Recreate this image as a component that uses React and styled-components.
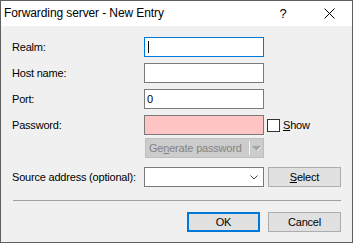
import React from "react";
import styled, { createGlobalStyle } from "styled-components";

const Global = createGlobalStyle`
  html, body { margin: 0; padding: 0; background: #ffffff; }
  * { box-sizing: border-box; }
`;

const Window = styled.div`
  width: 353px;
  height: 243px;
  border: 1px solid #5f5f5f;
  display: flex;
  flex-direction: column;
  font-family: "Liberation Sans", Arial, sans-serif;
  font-size: 11px;
  letter-spacing: -0.2px;
  color: #000;
  background: #f0f0f0;
`;

const TitleBar = styled.div`
  height: 25px;
  background: #ffffff;
  display: flex;
  align-items: center;
  padding-left: 3px;
`;

const Title = styled.div`
  flex: 1;
  font-size: 12px;
  letter-spacing: -0.1px;
  padding-bottom: 1px;
`;

const Help = styled.div`
  width: 46px;
  text-align: center;
  font-size: 13px;
  margin-right: 0;
`;

const Close = styled.div`
  width: 46px;
  height: 25px;
  display: flex;
  align-items: center;
  justify-content: center;
`;

const Body = styled.div`
  flex: 1;
  padding: 11px 11px 0 11px;
  display: flex;
  flex-direction: column;
`;

const Row = styled.div`
  display: flex;
  align-items: center;
  height: 20px;
  margin-top: ${(p) => p.$mt || 0}px;
`;

const Label = styled.div`
  width: 132px;
  padding-bottom: 1px;
`;

const Field = styled.div`
  width: 120px;
  height: 20px;
  background: ${(p) => (p.$error ? "#ffc4c4" : "#ffffff")};
  border: 1px solid ${(p) => (p.$focus ? "#0078d7" : "#7a7a7a")};
  display: flex;
  align-items: center;
  padding-left: 2px;
  position: relative;
`;

const Caret = styled.span`
  width: 1px;
  height: 12px;
  background: #000;
  margin-left: 1px;
`;

const Chevron = styled.svg`
  position: absolute;
  right: 5px;
  top: 7px;
`;

const CheckRow = styled.label`
  display: flex;
  align-items: center;
  margin-left: 3px;
  gap: 3px;
`;

const Box = styled.span`
  width: 13px;
  height: 13px;
  border: 1px solid #333;
  background: #fff;
`;

const Split = styled.div`
  width: 119px;
  height: 20px;
  margin-left: 1px;
  background: #cccccc;
  border: 1px solid #bfbfbf;
  color: #838383;
  display: flex;
  align-items: center;
`;

const SplitText = styled.div`
  flex: 1;
  padding-left: 3px;
`;

const SplitSep = styled.div`
  width: 1px;
  height: 14px;
  background: #f4f4f4;
`;

const SplitArrow = styled.div`
  width: 13px;
  display: flex;
  justify-content: center;
`;

const Button = styled.div`
  width: 73px;
  height: 20px;
  margin-left: ${(p) => p.$ml || 0}px;
  background: #e1e1e1;
  border: ${(p) => (p.$default ? "2px solid #0078d7" : "1px solid #adadad")};
  display: flex;
  align-items: center;
  justify-content: center;
  padding-bottom: 1px;
`;

const Line = styled.div`
  height: 1px;
  background: #a0a0a0;
  margin: 13px 0 11px 1px;
`;

const Footer = styled.div`
  display: flex;
  justify-content: flex-end;
  gap: 8px;
`;

const U = styled.span`
  text-decoration: underline;
  text-underline-offset: 1px;
`;

export default function App() {
  return (
    <>
      <Global />
      <Window>
        <TitleBar>
          <Title>Forwarding server - New Entry</Title>
          <Help>?</Help>
          <Close>
            <svg width="11" height="11" viewBox="0 0 11 11">
              <path d="M0.5 0.5L10.5 10.5M10.5 0.5L0.5 10.5" stroke="#000" strokeWidth="1" />
            </svg>
          </Close>
        </TitleBar>
        <Body>
          <Row>
            <Label>Realm:</Label>
            <Field $focus>
              <Caret />
            </Field>
          </Row>
          <Row $mt={6}>
            <Label>Host name:</Label>
            <Field />
          </Row>
          <Row $mt={6}>
            <Label>Port:</Label>
            <Field>0</Field>
          </Row>
          <Row $mt={6}>
            <Label>Password:</Label>
            <Field $error />
            <CheckRow>
              <Box />
              <span>
                <U>S</U>how
              </span>
            </CheckRow>
          </Row>
          <Row $mt={3}>
            <Label />
            <Split>
              <SplitText>
                Ge<U>n</U>erate password
              </SplitText>
              <SplitSep />
              <SplitArrow>
                <svg width="9" height="5" viewBox="0 0 9 5">
                  <path d="M0 0H9L4.5 4.5Z" fill="#a3a3a3" />
                  <path d="M5 5L9 1" stroke="#f4f4f4" strokeWidth="1" />
                </svg>
              </SplitArrow>
            </Split>
          </Row>
          <Row $mt={9}>
            <Label>Source address (optional):</Label>
            <Field>
              <Chevron width="8" height="5" viewBox="0 0 8 5">
                <path d="M0.5 0.5L4 4L7.5 0.5" stroke="#444" fill="none" strokeWidth="1" />
              </Chevron>
            </Field>
            <Button $ml={4}>
              <span>
                <U>S</U>elect
              </span>
            </Button>
          </Row>
          <Line />
          <Footer>
            <Button $default>OK</Button>
            <Button>Cancel</Button>
          </Footer>
        </Body>
      </Window>
    </>
  );
}
